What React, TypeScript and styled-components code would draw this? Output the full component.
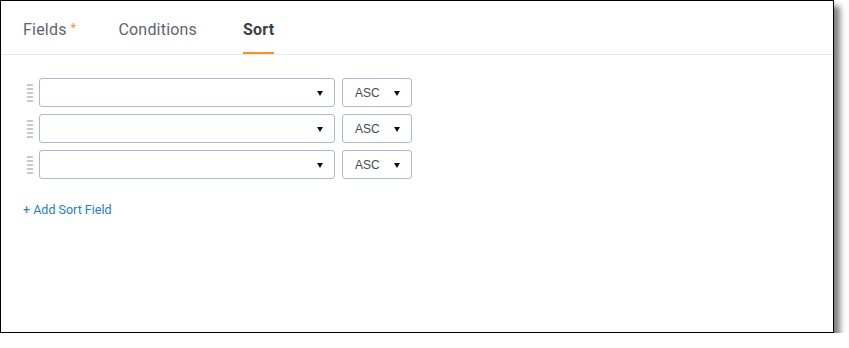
import { createGlobalStyle, styled } from "styled-components";

const GlobalStyle = createGlobalStyle`
  body {
    margin: 0;
    background: #ffffff;
    font-family: Roboto, "Liberation Sans", Arial, sans-serif;
  }
`;

const Frame = styled.div`
  box-sizing: border-box;
  width: 834px;
  height: 333px;
  border: 1px solid #000000;
  background: #ffffff;
  box-shadow: 6px 6px 6px rgba(0, 0, 0, 0.5);
`;

const TabBar = styled.div`
  display: flex;
  height: 54px;
  padding-left: 22px;
  border-bottom: 1px solid #e3e8ec;
  box-sizing: border-box;
`;

const Tab = styled.div<{ $active?: boolean; $gap: number }>`
  box-sizing: border-box;
  height: 53px;
  display: flex;
  align-items: center;
  padding-top: 5px;
  margin-right: ${(p) => p.$gap}px;
  font-size: 16px;
  letter-spacing: 0.2px;
  font-weight: ${(p) => (p.$active ? 700 : 400)};
  color: ${(p) => (p.$active ? "#3b4149" : "#5e656e")};
  border-bottom: 2px solid ${(p) => (p.$active ? "#f7941d" : "transparent")};
`;

const Required = styled.span`
  color: #f7941d;
  font-size: 13px;
  margin-left: 4px;
  margin-top: -3px;
`;

const Content = styled.div`
  padding: 23px 0 0 0;
`;

const Rows = styled.div`
  display: flex;
  flex-direction: column;
  gap: 7px;
  padding-left: 26px;
`;

const Row = styled.div`
  display: flex;
  align-items: center;
  height: 29px;
`;

const Handle = styled.div`
  display: flex;
  flex-direction: column;
  gap: 2px;
  width: 6px;
  margin-right: 6px;
  span {
    display: block;
    height: 2px;
    background: #c9c9c9;
  }
`;

const Select = styled.div<{ $width: number }>`
  box-sizing: border-box;
  width: ${(p) => p.$width}px;
  height: 29px;
  border: 1px solid #a9bbd0;
  border-radius: 3px;
  display: flex;
  align-items: center;
  padding: 0 11px 0 12px;
  margin-right: 7px;
  font-family: "Liberation Sans", Arial, sans-serif;
  font-size: 12px;
  color: #444a52;
`;

const Value = styled.span`
  flex: 1;
`;

const Caret = styled.span`
  width: 0;
  height: 0;
  border-left: 3.5px solid transparent;
  border-right: 3.5px solid transparent;
  border-top: 5px solid #111111;
  margin-top: 2px;
`;

const AddLink = styled.a`
  display: inline-block;
  margin: 23px 0 0 22px;
  font-size: 12.5px;
  color: #1b7ed6;
  text-decoration: none;
  cursor: pointer;
`;

const rows = [1, 2, 3];

export default function App() {
  return (
    <>
      <GlobalStyle />
      <Frame>
        <TabBar>
          <Tab $gap={42}>
            Fields<Required>*</Required>
          </Tab>
          <Tab $gap={46}>Conditions</Tab>
          <Tab $active $gap={0}>
            Sort
          </Tab>
        </TabBar>
        <Content>
          <Rows>
            {rows.map((r) => (
              <Row key={r}>
                <Handle>
                  <span />
                  <span />
                  <span />
                  <span />
                  <span />
                </Handle>
                <Select $width={296}>
                  <Value />
                  <Caret />
                </Select>
                <Select $width={70}>
                  <Value>ASC</Value>
                  <Caret />
                </Select>
              </Row>
            ))}
          </Rows>
          <AddLink>+ Add Sort Field</AddLink>
        </Content>
      </Frame>
    </>
  );
}
